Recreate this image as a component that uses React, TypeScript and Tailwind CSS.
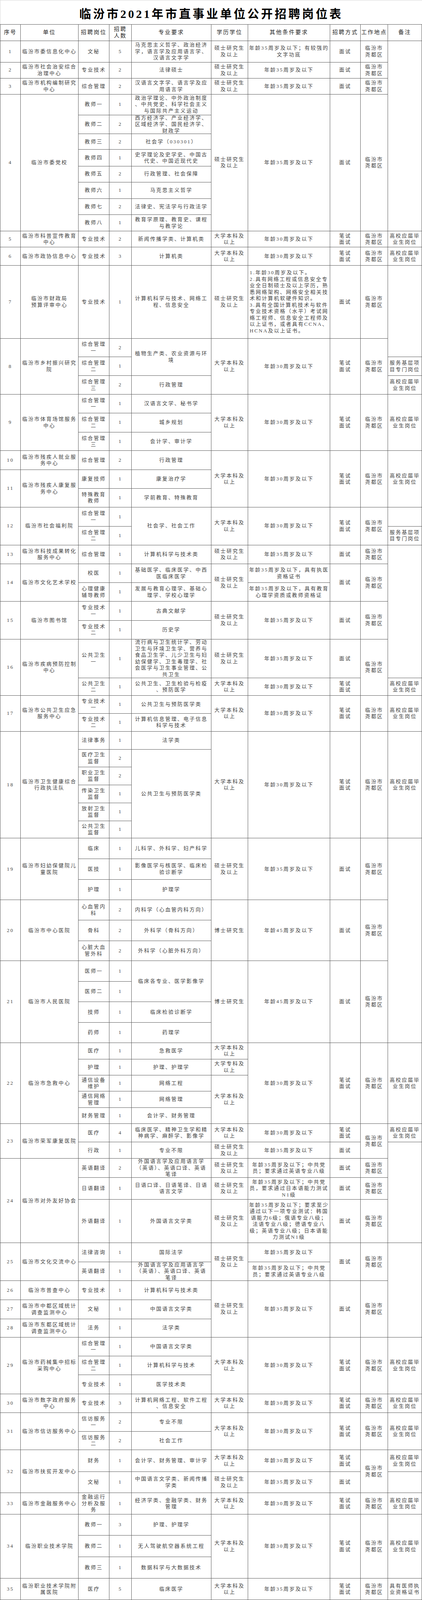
import React from 'react'

type Cell = { t: string; r: number; left?: boolean }

const c = (t: string, r = 1, left = false): Cell => ({ t, r, left })

const span: Record<number, string> = {
  1: '',
  2: 'row-span-2',
  3: 'row-span-3',
  4: 'row-span-4',
  5: 'row-span-5',
  6: 'row-span-6',
  8: 'row-span-8',
  10: 'row-span-10',
  11: 'row-span-11',
}

const A35 = '年龄35周岁及以下'
const A30 = '年龄30周岁及以下'
const A45 = '年龄45周岁及以下'
const SS = '硕士研究生\n及以上'
const BK = '大学本科及\n以上'
const BM = '笔试\n面试'
const LF = '临汾市\n尧都区'
const GX = '高校应届毕\n业生岗位'
const FW = '服务基层项\n目专门岗位'
const EN = '外国语言学及应用语言学\n（英语）、英语口译、英语\n笔译'
const ENG = '年龄35周岁及以下；中共党\n员；要求通过英语专业八级'

const G7 =
  '1.年龄30周岁及以下。\n2.具有网络工程或信息安全专\n业全日制硕士及以上学历，熟\n悉网络架构、网络安全相关技\n术和计算机软硬件知识。\n3.具有全国计算机技术与软件\n专业技术资格（水平）考试网\n络工程师、信息安全工程师及\n以上证书，或者具有CCNA、\nHCNA及以上证书。'

const headers = ['序号', '单位', '招聘岗位', '招聘\n人数', '专业要求', '学历学位', '其他条件要求', '招聘方式', '工作地点', '备注']

// one entry per sheet row; cells covered by a row span above are left out, as in a table
const rows: Cell[][] = [
  [c('1'), c('临汾市委信息化中心'), c('文秘'), c('5'), c('马克思主义哲学、政治经济\n学，语言学及应用语言学、\n汉语言文字学'), c(SS), c('年龄35周岁及以下；有较强的\n文字功底'), c('面试'), c(LF), c('', 11)],
  [c('2'), c('临汾市社会治安综合\n治理中心'), c('专业技术'), c('2'), c('法律硕士'), c(SS), c(A35), c('面试'), c(LF)],
  [c('3'), c('临汾市机构编制研究\n中心'), c('综合管理'), c('2'), c('汉语言文字学、语言学及应\n用语言学'), c(SS), c(A35), c('面试'), c(LF)],
  [c('4', 8), c('临汾市委党校', 8), c('教师一'), c('1'), c('政治学理论、中外政治制度\n、中共党史、科学社会主义\n与国际共产主义运动'), c(SS, 8), c(A35, 8), c('面试', 8), c(LF, 8)],
  [c('教师二'), c('2'), c('西方经济学、产业经济学、\n区域经济学、国民经济学、\n财政学')],
  [c('教师三'), c('2'), c('社会学（030301）')],
  [c('教师四'), c('1'), c('史学理论及史学史、中国古\n代史、中国近现代史')],
  [c('教师五'), c('2'), c('行政管理、社会保障')],
  [c('教师六'), c('1'), c('马克思主义哲学')],
  [c('教师七'), c('2'), c('法律史、宪法学与行政法学')],
  [c('教师八'), c('1'), c('教育学原理、教育史、课程\n与教学论')],
  [c('5'), c('临汾市科普宣传教育\n中心'), c('专业技术'), c('2'), c('新闻传播学类、计算机类'), c(BK), c(A30), c(BM), c(LF), c(GX)],
  [c('6'), c('临汾市政协信息中心'), c('专业技术'), c('3'), c('计算机类'), c(BK), c(A30), c(BM), c(LF), c(GX)],
  [c('7'), c('临汾市财政局\n预算评审中心'), c('专业技术'), c('1'), c('计算机科学与技术、网络工\n程、信息安全'), c(SS), c(G7, 1, true), c('面试'), c(LF), c('', 2)],
  [c('8', 3), c('临汾市乡村振兴研究\n院', 3), c('综合管理\n一'), c('2'), c('植物生产类、农业资源与环\n境', 2), c(BK, 3), c(A30, 3), c(BM, 3), c(LF, 3)],
  [c('综合管理\n二'), c('1'), c(FW)],
  [c('综合管理\n三'), c('2'), c('行政管理'), c(GX)],
  [c('9', 3), c('临汾市体育场馆服务\n中心', 3), c('综合管理\n一'), c('1'), c('汉语言文学、秘书学'), c(BK, 3), c(A30, 3), c(BM, 3), c(LF, 3), c(GX, 3)],
  [c('综合管理\n二'), c('1'), c('城乡规划')],
  [c('综合管理\n三'), c('1'), c('会计学、审计学')],
  [c('10'), c('临汾市残疾人就业服\n务中心'), c('综合管理'), c('2'), c('行政管理'), c(BK, 3), c(A30, 3), c(BM, 3), c(LF, 3), c(GX, 3)],
  [c('11', 2), c('临汾市残疾人康复服\n务中心', 2), c('康复技师'), c('1'), c('康复治疗学')],
  [c('特殊教育\n教师'), c('1'), c('学前教育、特殊教育')],
  [c('12', 2), c('临汾市社会福利院', 2), c('综合管理\n一'), c('1'), c('社会学、社会工作', 2), c(BK, 2), c(A30, 2), c(BM, 2), c(LF, 2), c('')],
  [c('综合管理\n二'), c('1'), c(FW)],
  [c('13'), c('临汾市科技成果转化\n服务中心'), c('综合管理'), c('1'), c('计算机科学与技术类'), c(SS), c(A35), c('面试'), c(LF), c('', 6)],
  [c('14', 2), c('临汾市文化艺术学校', 2), c('校医'), c('1'), c('基础医学、临床医学、中西\n医临床医学'), c(SS, 2), c('年龄35周岁及以下，具有执医\n资格证书'), c('面试', 2), c(LF, 2)],
  [c('心理健康\n辅导教师'), c('1'), c('发展与教育心理学、基础心\n理学、学校心理学'), c('年龄35周岁及以下，具有教育\n心理学资质或教师资格证')],
  [c('15', 2), c('临汾市图书馆', 2), c('专业技术\n一'), c('1'), c('古典文献学'), c(SS, 2), c(A35, 2), c('面试', 2), c(LF, 2)],
  [c('专业技术\n二'), c('1'), c('历史学')],
  [c('16', 2), c('临汾市疾病预防控制\n中心', 2), c('公共卫生\n一'), c('1'), c('流行病与卫生统计学、劳动\n卫生与环境卫生学、营养与\n食品卫生学、儿少卫生与妇\n幼保健学、卫生毒理学、社\n会医学与卫生事业管理、公\n共卫生'), c(SS), c(A35), c('面试'), c(LF, 2)],
  [c('公共卫生\n二'), c('1'), c('公共卫生、卫生检验与检疫\n、预防医学'), c(BK), c(A30), c(BM), c(GX)],
  [c('17', 2), c('临汾市公共卫生应急\n服务中心', 2), c('专业技术\n一'), c('1'), c('公共卫生与预防医学类'), c(BK, 2), c(A30, 2), c(BM, 2), c(LF, 2), c(GX, 2)],
  [c('专业技术\n二'), c('1'), c('计算机信息管理、电子信息\n科学与技术')],
  [c('18', 6), c('临汾市卫生健康综合\n行政执法队', 6), c('法律事务'), c('1'), c('法学类'), c(BK, 6), c(A30, 6), c(BM, 6), c(LF, 6), c(GX, 6)],
  [c('医疗卫生\n监督'), c('2'), c('公共卫生与预防医学类', 5)],
  [c('职业卫生\n监督'), c('2')],
  [c('传染卫生\n监督'), c('1')],
  [c('放射卫生\n监督'), c('1')],
  [c('公共卫生\n监督'), c('1')],
  [c('19', 3), c('临汾市妇幼保健院儿\n童医院', 3), c('临床'), c('1'), c('儿科学、外科学、妇产科学'), c(SS, 3), c(A35, 3), c('面试', 3), c(LF, 3), c('', 10)],
  [c('医技'), c('1'), c('影像医学与核医学、临床检\n验诊断学')],
  [c('护理'), c('1'), c('护理学')],
  [c('20', 3), c('临汾市中心医院', 3), c('心血管内\n科'), c('2'), c('内科学（心血管内科方向）'), c('博士研究生', 3), c(A45, 3), c('面试', 3), c(LF, 3)],
  [c('骨科'), c('2'), c('外科学（骨科方向）')],
  [c('心脏大血\n管外科'), c('2'), c('外科学（心脏外科方向）')],
  [c('21', 4), c('临汾市人民医院', 4), c('医师一'), c('1'), c('临床各专业、医学影像学', 2), c('博士研究生', 4), c(A45, 4), c('面试', 4), c(LF, 4)],
  [c('医师二'), c('1')],
  [c('技师'), c('1'), c('临床检验诊断学')],
  [c('药师'), c('1'), c('药理学')],
  [c('22', 5), c('临汾市急救中心', 5), c('医疗'), c('1'), c('急救医学'), c(BK), c(A30, 5), c(BM, 5), c(LF, 5), c(GX, 5)],
  [c('护理'), c('1'), c('护理、护理学'), c('大学专科及\n以上')],
  [c('通信设备\n维护'), c('1'), c('网络工程'), c(BK, 3)],
  [c('通信网络\n管理'), c('1'), c('网络管理')],
  [c('财务管理'), c('1'), c('会计学、财务管理')],
  [c('23', 2), c('临汾市荣军康复医院', 2), c('医疗'), c('4'), c('临床医学、精神卫生学和精\n神病学、麻醉学、影像学'), c(BK), c(A30), c(BM), c(LF, 2), c(GX)],
  [c('行政'), c('1'), c('专业不限'), c(SS), c(A35), c('面试'), c('', 4)],
  [c('24', 3), c('临汾市对外友好协会', 3), c('英语翻译'), c('2'), c(EN), c(SS), c(ENG), c('面试'), c(LF)],
  [c('日语翻译'), c('1'), c('日语口译、日语笔译、日语\n语言文学'), c(SS), c('年龄35周岁及以下；中共党\n员，要求通过日本语能力测试\nN1级'), c('面试'), c(LF)],
  [c('外语翻译'), c('1'), c('外国语言文学类'), c(SS), c('年龄35周岁及以下；要求至少\n通过以下一项专业测试：韩国\n语能力6级；俄语专业八级；\n法语专业八级；德语专业八\n级；英语专业八级；日本语能\n力测试N1级'), c('面试'), c(LF)],
  [c('25', 2), c('临汾市文化交流中心', 2), c('法律咨询'), c('1'), c('国际法学'), c(SS, 2), c(A35), c('面试', 2), c(LF, 2), c('', 5)],
  [c('英语翻译'), c('1'), c(EN), c(ENG)],
  [c('26'), c('临汾市普查中心'), c('专业技术'), c('1'), c('计算机科学与技术类'), c(SS, 3), c(A35, 3), c('面试', 3), c(LF, 3)],
  [c('27'), c('临汾市中都区域统计\n调查监测中心'), c('文秘'), c('1'), c('中国语言文学类')],
  [c('28'), c('临汾市东都区域统计\n调查监测中心'), c('法务'), c('1'), c('法学类')],
  [c('29', 3), c('临汾市药械集中招标\n采购中心', 3), c('综合管理\n一'), c('1'), c('中国语言文学类'), c(BK, 3), c(A30, 3), c(BM, 3), c(LF, 3), c(GX, 3)],
  [c('综合管理\n二'), c('1'), c('计算机科学与技术')],
  [c('专业技术'), c('1'), c('医学技术类')],
  [c('30'), c('临汾市数字政府服务\n中心'), c('专业技术'), c('3'), c('计算机网络工程、软件工程\n、信息安全'), c(BK), c(A30), c(BM), c(LF), c(GX)],
  [c('31', 2), c('临汾市信访服务中心', 2), c('信访服务\n一'), c('2'), c('专业不限'), c(BK, 2), c(A30, 2), c(BM, 2), c(LF, 2), c(GX, 2)],
  [c('信访服务\n二'), c('2'), c('社会工作')],
  [c('32', 2), c('临汾市扶贫开发中心', 2), c('财务'), c('1'), c('会计学、财务管理、审计学'), c(BK), c(A30), c(BM), c(LF, 2), c(GX)],
  [c('文秘'), c('1'), c('中国语言文学类、新闻传播\n学类'), c(SS), c(A35), c('面试'), c('')],
  [c('33'), c('临汾市金融服务中心'), c('金融运行\n分析及服\n务'), c('1'), c('经济学类、金融学类、财务\n管理'), c(BK), c(A30), c(BM), c(LF), c(GX)],
  [c('34', 3), c('临汾职业技术学院', 3), c('教师一'), c('3'), c('护理、护理学'), c(BK, 3), c(A30, 3), c(BM, 3), c(LF, 3), c(GX, 3)],
  [c('教师二'), c('1'), c('无人驾驶航空器系统工程')],
  [c('教师三'), c('1'), c('数据科学与大数据技术')],
  [c('35'), c('临汾职业技术学院附\n属医院'), c('医疗'), c('5'), c('临床医学'), c(BK), c(A35), c(BM), c(LF), c('具有医师执\n业资格证书')],
]

export default function App() {
  const cells = rows.flat()
  return (
    <div className="w-[1080px] h-screen min-h-[1200px] flex flex-col bg-white font-['Liberation_Serif','Noto_Sans_CJK_SC',serif]">
      <div className="h-[62px] shrink-0 flex items-center justify-center pt-2 border-t border-l border-[#d8d8d8]">
        <h1 className="text-[30px] font-bold tracking-[5px] text-black">临汾市2021年市直事业单位公开招聘岗位表</h1>
      </div>
      {/* row tracks keep the sheet's proportions and share out whatever height the window gives */}
      <div className="flex-1 min-h-0 grid grid-cols-[51px_147px_78px_56px_203px_93px_209px_77px_69px_86px] grid-rows-[43fr_56fr_42fr_42fr_54fr_50fr_41fr_43fr_42fr_43fr_42fr_43fr_42fr_48fr_194fr_49fr_49fr_49fr_49fr_50fr_49fr_50fr_49fr_49fr_50fr_49fr_50fr_49fr_49fr_50fr_49fr_103fr_46fr_47fr_47fr_47fr_46fr_47fr_47fr_47fr_46fr_54fr_54fr_54fr_53fr_54fr_53fr_54fr_54fr_54fr_53fr_43fr_42fr_42fr_43fr_42fr_48fr_43fr_50fr_57fr_116fr_50fr_49fr_50fr_50fr_48fr_50fr_49fr_50fr_49fr_49fr_49fr_57fr_56fr_56fr_56fr_56fr_57fr_56fr] gap-px bg-[#595959] border border-[#595959] text-[13px] tracking-[2.5px] leading-[16.5px] text-[#3f3f3f]">
        {headers.map(h => (
          <div key={h} className="bg-white flex items-center justify-center text-center whitespace-pre overflow-hidden text-[14px] text-[#1f1f1f]">
            {h}
          </div>
        ))}
        {cells.map((cell, i) => (
          <div
            key={i}
            className={
              'bg-white flex items-center whitespace-pre overflow-hidden ' +
              span[cell.r] +
              (cell.left ? ' justify-start text-left pl-1' : ' justify-center text-center')
            }
          >
            {cell.t}
          </div>
        ))}
      </div>
    </div>
  )
}
